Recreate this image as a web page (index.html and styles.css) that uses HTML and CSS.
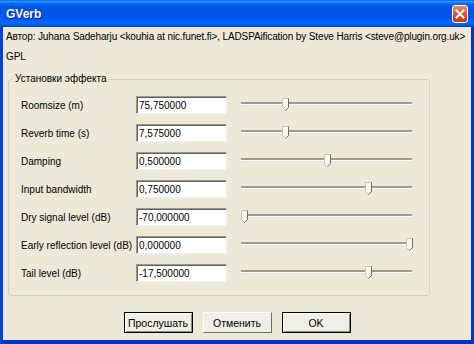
FILE: index.html
```html
<!DOCTYPE html>
<html lang="ru">
<head>
  <meta charset="UTF-8">
  <title>GVerb</title>
  <link rel="stylesheet" href="styles.css">
</head>
<body>

  <div class="window">
    <!-- ЗАГОЛОВОК -->
    <div class="titlebar">
      <span class="title">GVerb</span>
      <button class="close" title="Закрыть">
        <svg width="10" height="10" viewBox="0 0 10 10"><path d="M1.5 1.5 L8.5 8.5 M8.5 1.5 L1.5 8.5" stroke="#fff" stroke-width="2" stroke-linecap="square"/></svg>
      </button>
    </div>

    <div class="client">
      <p class="info">Автор: Juhana Sadeharju &lt;kouhia at nic.funet.fi&gt;, LADSPAification by Steve Harris &lt;steve@plugin.org.uk&gt;</p>
      <p class="info">GPL</p>

      <fieldset class="group">
        <legend>Установки эффекта</legend>

        <div class="row">
          <label>Roomsize (m)</label>
          <input type="text" value="75,750000">
          <div class="slider"><div class="rail"><span class="thumb" style="left:25%"><svg width="7" height="13" viewBox="0 0 7 13"><path d="M0.5 0.5 H6.5 V9.5 L3.5 12.5 L0.5 9.5 Z" fill="#f7f6ef" stroke="#c9c6b8"/><path d="M6.5 0.5 V9.5 L3.5 12.5" fill="none" stroke="#6f6d62"/></svg></span></div></div>
        </div>
        <div class="row">
          <label>Reverb time (s)</label>
          <input type="text" value="7,575000">
          <div class="slider"><div class="rail"><span class="thumb" style="left:25%"><svg width="7" height="13" viewBox="0 0 7 13"><path d="M0.5 0.5 H6.5 V9.5 L3.5 12.5 L0.5 9.5 Z" fill="#f7f6ef" stroke="#c9c6b8"/><path d="M6.5 0.5 V9.5 L3.5 12.5" fill="none" stroke="#6f6d62"/></svg></span></div></div>
        </div>
        <div class="row">
          <label>Damping</label>
          <input type="text" value="0,500000">
          <div class="slider"><div class="rail"><span class="thumb" style="left:50%"><svg width="7" height="13" viewBox="0 0 7 13"><path d="M0.5 0.5 H6.5 V9.5 L3.5 12.5 L0.5 9.5 Z" fill="#f7f6ef" stroke="#c9c6b8"/><path d="M6.5 0.5 V9.5 L3.5 12.5" fill="none" stroke="#6f6d62"/></svg></span></div></div>
        </div>
        <div class="row">
          <label>Input bandwidth</label>
          <input type="text" value="0,750000">
          <div class="slider"><div class="rail"><span class="thumb" style="left:75%"><svg width="7" height="13" viewBox="0 0 7 13"><path d="M0.5 0.5 H6.5 V9.5 L3.5 12.5 L0.5 9.5 Z" fill="#f7f6ef" stroke="#c9c6b8"/><path d="M6.5 0.5 V9.5 L3.5 12.5" fill="none" stroke="#6f6d62"/></svg></span></div></div>
        </div>
        <div class="row">
          <label>Dry signal level (dB)</label>
          <input type="text" value="-70,000000">
          <div class="slider"><div class="rail"><span class="thumb" style="left:0%"><svg width="7" height="13" viewBox="0 0 7 13"><path d="M0.5 0.5 H6.5 V9.5 L3.5 12.5 L0.5 9.5 Z" fill="#f7f6ef" stroke="#c9c6b8"/><path d="M6.5 0.5 V9.5 L3.5 12.5" fill="none" stroke="#6f6d62"/></svg></span></div></div>
        </div>
        <div class="row">
          <label>Early reflection level (dB)</label>
          <input type="text" value="0,000000">
          <div class="slider"><div class="rail"><span class="thumb" style="left:100%"><svg width="7" height="13" viewBox="0 0 7 13"><path d="M0.5 0.5 H6.5 V9.5 L3.5 12.5 L0.5 9.5 Z" fill="#f7f6ef" stroke="#c9c6b8"/><path d="M6.5 0.5 V9.5 L3.5 12.5" fill="none" stroke="#6f6d62"/></svg></span></div></div>
        </div>
        <div class="row">
          <label>Tail level (dB)</label>
          <input type="text" value="-17,500000">
          <div class="slider"><div class="rail"><span class="thumb" style="left:75%"><svg width="7" height="13" viewBox="0 0 7 13"><path d="M0.5 0.5 H6.5 V9.5 L3.5 12.5 L0.5 9.5 Z" fill="#f7f6ef" stroke="#c9c6b8"/><path d="M6.5 0.5 V9.5 L3.5 12.5" fill="none" stroke="#6f6d62"/></svg></span></div></div>
        </div>
      </fieldset>

      <!-- КНОПКИ -->
      <div class="buttons">
        <button class="btn btn-focus">Прослушать</button>
        <button class="btn">Отменить</button>
        <button class="btn btn-default">OK</button>
      </div>
    </div>
  </div>

</body>
</html>
```

FILE: styles.css
```css
body { margin: 0; font-family: "Liberation Sans", Arial, sans-serif; font-size: 10px; color: #000; }

.window {
  width: 474px; height: 344px;
  display: flex; flex-direction: column;
  overflow: hidden;
}

.titlebar {
  height: 27px; flex: none;
  display: flex; align-items: center; justify-content: space-between;
  padding: 0 6px 0 6px;
  box-sizing: border-box;
  background: linear-gradient(to bottom, #0058ee 0%, #3593ff 5%, #1a84ff 9%, #036ffc 13%, #0262ee 18%, #0057e5 26%, #0054e3 40%, #0055eb 60%, #005bf5 72%, #026afe 82%, #0062ef 90%, #0052d6 96%, #0040ab 100%);
}
.title {
  color: #fff; font-weight: bold; font-size: 12px;
  text-shadow: 1px 1px 0 #0a1e7a;
}
.close {
  width: 16px; height: 18px; padding: 0;
  display: flex; align-items: center; justify-content: center;
  border: 1px solid #fff; border-radius: 3px;
  background: linear-gradient(to bottom, #eb8a6e 0%, #e2603e 35%, #d2462a 70%, #c23a1f 100%);
}

.client {
  flex: 1;
  background: #ece9d8;
  border-left: 3px solid #0842d6;
  border-right: 3px solid #0733c8;
  border-bottom: 4px solid #0733c8;
}

.info { margin: 0; padding-left: 3px; line-height: 20px; white-space: nowrap; letter-spacing: -0.13px; }

.group {
  margin: 6px 0 0 5px; width: 422px; box-sizing: border-box;
  padding: 6px 0 8px 12px;
  border: 1px solid #d0d0bf; border-radius: 3px;
}
.group legend { margin-left: -8px; padding: 0 2px; line-height: 12px; }

.row {
  display: grid;
  grid-template-columns: 115px 91px 185px;
  align-items: center;
  height: 28px;
}
.row label { white-space: nowrap; }
.row input {
  width: 91px; height: 18px; box-sizing: border-box;
  margin: 0; padding: 0 2px;
  font: inherit;
  background: #fff;
  border: 1px solid; border-color: #9d9a8a #f3f2ea #f3f2ea #9d9a8a;
  box-shadow: inset 1px 1px 0 #646359;
}

.slider { position: relative; height: 13px; padding: 0 3px; margin: -1px 0 0 14px; }
.slider::before {
  content: ""; position: absolute; left: 0; right: 0; top: 4px;
  height: 2px; background: #a09d8f; border-bottom: 1px solid #fff;
}
.rail { position: relative; height: 13px; }
.thumb { position: absolute; top: 0; width: 7px; height: 13px; margin-left: -3px; }
.thumb svg { display: block; }

.buttons { display: flex; justify-content: center; gap: 10px; margin-top: 16px; }
.btn {
  width: 69px; height: 21px; padding: 0;
  font: inherit; font-size: 10.5px;
  background: #f0efe6;
  border: 1px solid; border-color: #fff #716f64 #716f64 #fff;
}
.btn-focus, .btn-default {
  border: 1px solid #000;
  box-shadow: inset 1px 1px 0 #fff, inset -1px -1px 0 #8e8c80;
}
```
